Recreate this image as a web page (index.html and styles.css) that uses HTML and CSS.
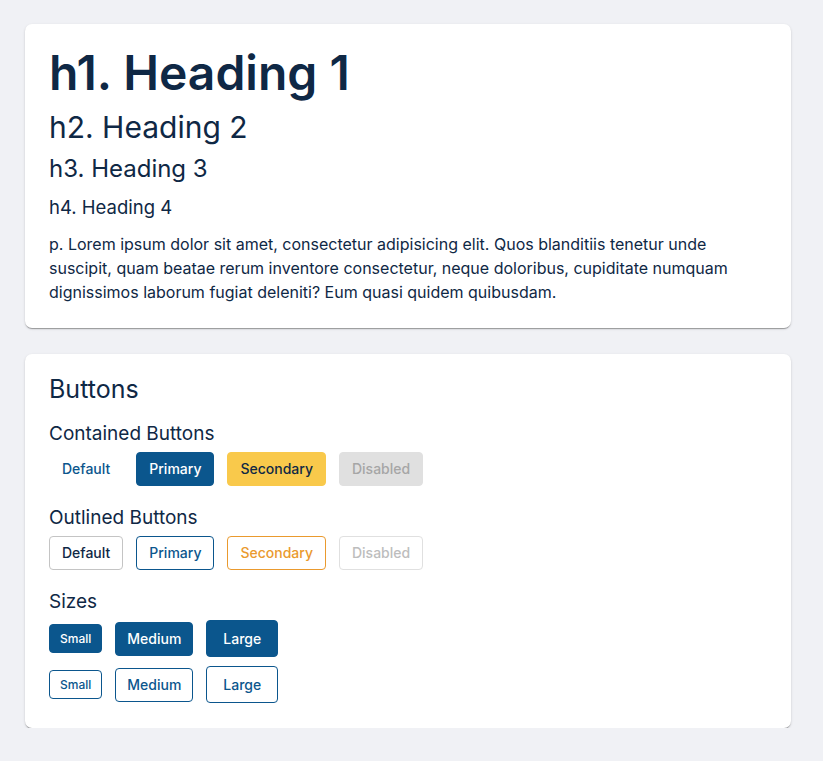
FILE: index.html
```html
<!DOCTYPE html>
<html>
<head>
<meta charset="utf-8">
<link rel="stylesheet" href="styles.css">
</head>
<body>
<div class="page">
  <section class="card card-type">
    <h1 class="h1">h1. Heading 1</h1>
    <h2 class="h2">h2. Heading 2</h2>
    <h3 class="h3">h3. Heading 3</h3>
    <h4 class="h4">h4. Heading 4</h4>
    <p class="para">p. Lorem ipsum dolor sit amet, consectetur adipisicing elit. Quos blanditiis tenetur unde suscipit, quam beatae rerum inventore consectetur, neque doloribus, cupiditate numquam dignissimos laborum fugiat deleniti? Eum quasi quidem quibusdam.</p>
  </section>
  <section class="card card-buttons">
    <h2 class="title">Buttons</h2>
    <h3 class="sub sub-first">Contained Buttons</h3>
    <div class="row">
      <button class="btn text-primary">Default</button>
      <button class="btn contained-primary">Primary</button>
      <button class="btn contained-secondary">Secondary</button>
      <button class="btn contained-disabled">Disabled</button>
    </div>
    <h3 class="sub">Outlined Buttons</h3>
    <div class="row">
      <button class="btn outlined-default">Default</button>
      <button class="btn outlined-primary">Primary</button>
      <button class="btn outlined-secondary">Secondary</button>
      <button class="btn outlined-disabled">Disabled</button>
    </div>
    <h3 class="sub">Sizes</h3>
    <div class="row row-sizes">
      <button class="btn contained-primary small">Small</button>
      <button class="btn contained-primary medium">Medium</button>
      <button class="btn contained-primary large">Large</button>
    </div>
    <div class="row row-sizes">
      <button class="btn outlined-primary small">Small</button>
      <button class="btn outlined-primary medium">Medium</button>
      <button class="btn outlined-primary large">Large</button>
    </div>
  </section>
</div>
</body>
</html>
```

FILE: styles.css
```css
html, body {
  margin: 0;
  padding: 0;
  background: #f0f1f5;
}
body {
  font-family: Inter, "Noto Sans", sans-serif;
  color: #0f2845;
}
.page {
  width: 766px;
  padding: 24px 0 0 25px;
  display: flex;
  flex-direction: column;
  gap: 26px;
}
.card {
  background: #fff;
  border-radius: 7px;
  box-shadow: 0 2px 1px -1px rgba(0,0,0,0.2), 0 1px 1px 0 rgba(0,0,0,0.14), 0 1px 3px 0 rgba(0,0,0,0.12);
  padding: 20px 24px 24px 24px;
}
.h1, .h2, .h3, .h4, .para, .title, .sub { margin: 0; }
.h1 {
  font-size: 48px;
  font-weight: 600;
  line-height: 58px;
}
.h2 {
  font-size: 30px;
  font-weight: 400;
  line-height: 40px;
  margin-top: 5px;
}
.h3 {
  font-size: 24px;
  font-weight: 400;
  line-height: 36px;
  margin-top: 4px;
}
.h4 {
  font-size: 18.5px;
  font-weight: 400;
  line-height: 32px;
  margin-top: 4px;
}
.para {
  font-size: 16px;
  line-height: 24px;
  margin-top: 9px;
}
.card-buttons { padding: 19px 24px 25px 24px; }
.title {
  font-size: 25px;
  font-weight: 400;
  line-height: 32px;
}
.sub {
  font-size: 19px;
  font-weight: 400;
  line-height: 26px;
  margin-top: 19px;
  margin-bottom: 5px;
}
.sub-first { margin-top: 16px; }
.row {
  display: flex;
  align-items: center;
  gap: 13px;
}
.row-sizes { margin-top: 1px; }
.row-sizes + .row-sizes { margin-top: 9px; }
.btn {
  font-family: Inter, "Noto Sans", sans-serif;
  font-size: 14px;
  font-weight: 500;
  letter-spacing: 0;
  line-height: 22px;
  padding: 5px 12px;
  border-radius: 4px;
  border: 1px solid transparent;
  background: transparent;
}
.text-primary { color: #0b568d; }
.contained-primary { background: #0b568d; border-color: #0b568d; color: #fff; }
.contained-secondary { background: #f9c94b; border-color: #f9c94b; color: #0f2845; }
.contained-disabled { background: #e0e0e0; border-color: #e0e0e0; color: #a6a6a6; }
.outlined-default { border-color: #c4c4c4; color: #0f2845; }
.outlined-primary { border-color: #0b568d; color: #0b568d; }
.outlined-secondary { border-color: #ea9a2e; color: #ea9a2e; }
.outlined-disabled { border-color: #e0e0e0; color: #bdbdbd; }
.small { font-size: 12px; line-height: 19px; padding: 4px 10px; }
.medium { padding: 5px 11px; }
.large { line-height: 23px; padding: 6px 16px; }
```
